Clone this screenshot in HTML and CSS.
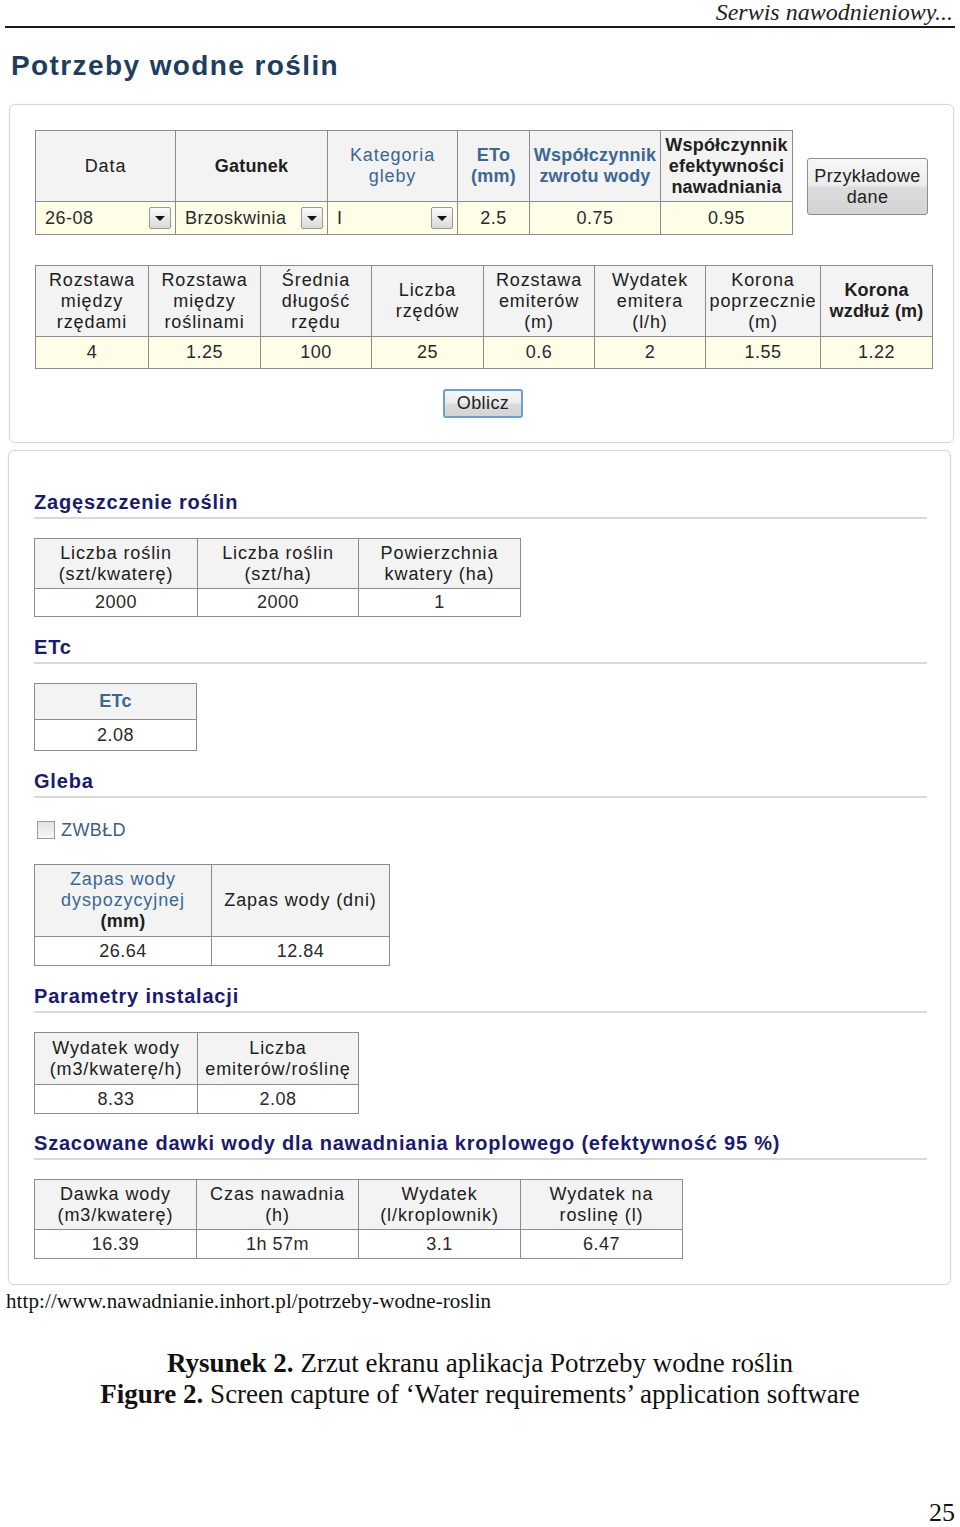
FILE: index.html
```html
<!DOCTYPE html>
<html lang="pl">
<head>
<meta charset="utf-8">
<title>Potrzeby wodne roślin</title>
<link rel="stylesheet" href="styles.css">
</head>
<body>
<div class="running-head">Serwis nawodnieniowy...</div>

<h1 class="page-title">Potrzeby wodne roślin</h1>

<div class="panel panel-form">
  <div class="row-top">
    <table class="grid t1">
      <colgroup><col class="w140"><col class="w152"><col class="w130"><col class="w72"><col class="w131"><col class="w132"></colgroup>
      <tr class="head h71">
        <th class="dark">Data</th>
        <th class="dark b">Gatunek</th>
        <th class="blue">Kategoria<br>gleby</th>
        <th class="blue b">ETo<br>(mm)</th>
        <th class="blue b">Współczynnik<br>zwrotu wody</th>
        <th class="dark b">Współczynnik<br>efektywności<br>nawadniania</th>
      </tr>
      <tr class="data yellow h33">
        <td class="sel"><div class="select"><span>26-08</span><span class="arrow"></span></div></td>
        <td class="sel"><div class="select"><span>Brzoskwinia</span><span class="arrow"></span></div></td>
        <td class="sel"><div class="select"><span>I</span><span class="arrow"></span></div></td>
        <td>2.5</td>
        <td>0.75</td>
        <td>0.95</td>
      </tr>
    </table>
    <button class="btn btn-sample">Przykładowe<br>dane</button>
  </div>

  <table class="grid t2">
    <colgroup><col class="w113"><col class="w112"><col class="w111"><col class="w112"><col class="w111"><col class="w111"><col class="w115"><col class="w112"></colgroup>
    <tr class="head h71">
      <th class="dark">Rozstawa<br>między<br>rzędami</th>
      <th class="dark">Rozstawa<br>między<br>roślinami</th>
      <th class="dark">Średnia<br>długość<br>rzędu</th>
      <th class="dark">Liczba<br>rzędów</th>
      <th class="dark">Rozstawa<br>emiterów<br>(m)</th>
      <th class="dark">Wydatek<br>emitera<br>(l/h)</th>
      <th class="dark">Korona<br>poprzecznie<br>(m)</th>
      <th class="dark b">Korona<br>wzdłuż (m)</th>
    </tr>
    <tr class="data yellow h32">
      <td>4</td><td>1.25</td><td>100</td><td>25</td><td>0.6</td><td>2</td><td>1.55</td><td>1.22</td>
    </tr>
  </table>

  <div class="calc-row"><button class="btn btn-calc">Oblicz</button></div>
</div>

<div class="panel panel-results">
  <h2 class="sec-title first">Zagęszczenie roślin</h2>
  <table class="grid t3">
    <colgroup><col class="w163"><col class="w161"><col class="w162"></colgroup>
    <tr class="head h50">
      <th class="dark">Liczba roślin<br>(szt/kwaterę)</th>
      <th class="dark">Liczba roślin<br>(szt/ha)</th>
      <th class="dark">Powierzchnia<br>kwatery (ha)</th>
    </tr>
    <tr class="data h28"><td>2000</td><td>2000</td><td>1</td></tr>
  </table>

  <h2 class="sec-title">ETc</h2>
  <table class="grid t4">
    <colgroup><col class="w162"></colgroup>
    <tr class="head h36"><th class="blue b">ETc</th></tr>
    <tr class="data h31"><td>2.08</td></tr>
  </table>

  <h2 class="sec-title">Gleba</h2>
  <label class="check"><span class="box"></span><span class="check-label">ZWBŁD</span></label>
  <table class="grid t5">
    <colgroup><col class="w177"><col class="w178"></colgroup>
    <tr class="head h72">
      <th class="blue">Zapas wody<br>dyspozycyjnej<br><span class="dark">(mm)</span></th>
      <th class="dark">Zapas wody (dni)</th>
    </tr>
    <tr class="data h29"><td>26.64</td><td>12.84</td></tr>
  </table>

  <h2 class="sec-title">Parametry instalacji</h2>
  <table class="grid t6">
    <colgroup><col class="w163"><col class="w161"></colgroup>
    <tr class="head h52">
      <th class="dark">Wydatek wody<br>(m3/kwaterę/h)</th>
      <th class="dark">Liczba<br>emiterów/roślinę</th>
    </tr>
    <tr class="data h29"><td>8.33</td><td>2.08</td></tr>
  </table>

  <h2 class="sec-title tight">Szacowane dawki wody dla nawadniania kroplowego (efektywność 95 %)</h2>
  <table class="grid t7">
    <colgroup><col class="w162"><col class="w162"><col class="w162"><col class="w162"></colgroup>
    <tr class="head h50">
      <th class="dark">Dawka wody<br>(m3/kwaterę)</th>
      <th class="dark">Czas nawadnia<br>(h)</th>
      <th class="dark">Wydatek<br>(l/kroplownik)</th>
      <th class="dark">Wydatek na<br>roslinę (l)</th>
    </tr>
    <tr class="data h29"><td>16.39</td><td>1h 57m</td><td>3.1</td><td>6.47</td></tr>
  </table>
</div>

<p class="source">http://www.nawadnianie.inhort.pl/potrzeby-wodne-roslin</p>

<div class="caption">
  <p><b>Rysunek 2.</b> Zrzut ekranu aplikacja Potrzeby wodne roślin</p>
  <p><b>Figure 2.</b> Screen capture of ‘Water requirements’ application software</p>
</div>

<div class="page-num">25</div>
</body>
</html>
```

FILE: styles.css
```css
html, body {
  margin: 0;
  padding: 0;
  background: #fff;
}
body {
  width: 960px;
  height: 1527px;
  position: relative;
  font-family: "Liberation Sans", Arial, sans-serif;
  color: #222;
  overflow: hidden;
}

.running-head {
  margin: 0 5px;
  height: 26px;
  border-bottom: 2px solid #1a1a1a;
  text-align: right;
  padding-right: 2px;
  font: italic 24px/24px "Liberation Serif", "Times New Roman", serif;
  color: #222;
}

.page-title {
  margin: 22px 0 22px 11px;
  font: bold 28px/32px "Liberation Sans", Arial, sans-serif;
  letter-spacing: 1.4px;
  color: #1f3d5e;
}

.panel {
  border: 1px solid #d6d6d6;
  border-radius: 6px;
  box-shadow: 0 0 2px rgba(0,0,0,0.08);
}
.panel-form {
  margin: 0 6px 0 9px;
  padding: 25px 25px 24px 25px;
}
.panel-results {
  margin: 7px 9px 0 8px;
  padding: 40px 23px 25px 25px;
}

.row-top {
  display: flex;
  align-items: flex-start;
}

.grid {
  border-collapse: collapse;
  table-layout: fixed;
  font-size: 18px;
  line-height: 21px;
}
.grid th, .grid td {
  border: 1px solid #8c8c8c;
  padding: 0 2px;
  text-align: center;
  vertical-align: middle;
  overflow: hidden;
  white-space: nowrap;
}
.grid th {
  background: #f3f3f3;
  font-weight: normal;
  letter-spacing: 0.9px;
}
.grid th.b { font-weight: bold; letter-spacing: 0.2px; }
.grid td {
  background: #fff;
  color: #2a2a2a;
  letter-spacing: 0.5px;
}
.grid .yellow td { background: #fefde8; }

.dark { color: #202020; }
.blue { color: #3b6792; }
th.blue .dark { color: #202020; font-weight: bold; letter-spacing: 0.2px; }

.t1 { width: 757px; }
.t2 { width: 897px; margin-top: 30px; }
.t3 { width: 486px; }
.t4 { width: 162px; }
.t5 { width: 355px; }
.t6 { width: 324px; }
.t7 { width: 648px; }

.w72 { width: 72px; }
.w111 { width: 111px; }
.w112 { width: 112px; }
.w113 { width: 113px; }
.w115 { width: 115px; }
.w130 { width: 130px; }
.w131 { width: 131px; }
.w132 { width: 132px; }
.w140 { width: 140px; }
.w152 { width: 152px; }
.w161 { width: 161px; }
.w162 { width: 162px; }
.w163 { width: 163px; }
.w177 { width: 177px; }
.w178 { width: 178px; }

.h28 { height: 28px; }
.h29 { height: 29px; }
.h31 { height: 31px; }
.h32 { height: 32px; }
.h33 { height: 33px; }
.h36 { height: 36px; }
.h50 { height: 50px; }
.h52 { height: 52px; }
.h71 { height: 71px; }
.h72 { height: 72px; }

.grid td.sel {
  padding: 0 4px 0 9px;
  text-align: left;
}
.select {
  display: flex;
  align-items: center;
  justify-content: space-between;
}
.arrow {
  width: 22px;
  height: 22px;
  border: 1px solid #9a9a9a;
  border-radius: 2px;
  background: linear-gradient(#fbfbfb, #d9d9d9);
  position: relative;
  box-sizing: border-box;
}
.arrow::after {
  content: "";
  position: absolute;
  left: 5px;
  top: 8px;
  border-left: 5px solid transparent;
  border-right: 5px solid transparent;
  border-top: 5px solid #111;
}

.btn {
  font-family: "Liberation Sans", Arial, sans-serif;
  font-size: 18px;
  line-height: 21px;
  color: #222;
  border: 1px solid #8d8d8d;
  border-radius: 3px;
  background: linear-gradient(#f7f7f7 0%, #ececec 48%, #dcdcdc 52%, #d4d4d4 100%);
  padding: 0;
  letter-spacing: 0.4px;
}
.btn-sample {
  margin: 28px 0 0 14px;
  width: 122px;
  height: 57px;
}
.calc-row {
  margin-top: 20px;
  display: flex;
  justify-content: center;
  padding-left: 3px;
}
.btn-calc {
  width: 80px;
  height: 29px;
  border: 2px solid #6f9fcf;
  border-radius: 3px;
}

.sec-title {
  margin: 19px 0 19px 0;
  padding-bottom: 4px;
  border-bottom: 2px solid #d9d9d9;
  font: bold 20px/22px "Liberation Sans", Arial, sans-serif;
  letter-spacing: 0.8px;
  color: #1b1b6e;
}
.sec-title.first { margin-top: 0; }
.sec-title.tight { margin-top: 18px; }

.check {
  display: flex;
  align-items: center;
  margin: 23px 0 25px 3px;
  height: 18px;
}
.box {
  width: 18px;
  height: 18px;
  box-sizing: border-box;
  border: 1px solid #9a9a9a;
  background: linear-gradient(#e2e2e2, #f7f7f7);
}
.check-label {
  margin-left: 6px;
  font-size: 18px;
  color: #3f5f80;
  letter-spacing: 0.4px;
}

.source {
  margin: 4px 0 0 6px;
  font: 21px/24px "Liberation Serif", "Times New Roman", serif;
  letter-spacing: 0.1px;
  color: #111;
}

.caption {
  margin-top: 35px;
  text-align: center;
  font: 27px/31px "Liberation Serif", "Times New Roman", serif;
  color: #111;
}
.caption p { margin: 0; }

.page-num {
  position: absolute;
  right: 5px;
  bottom: 0;
  font: 26px/28px "Liberation Serif", "Times New Roman", serif;
  color: #111;
}
```
